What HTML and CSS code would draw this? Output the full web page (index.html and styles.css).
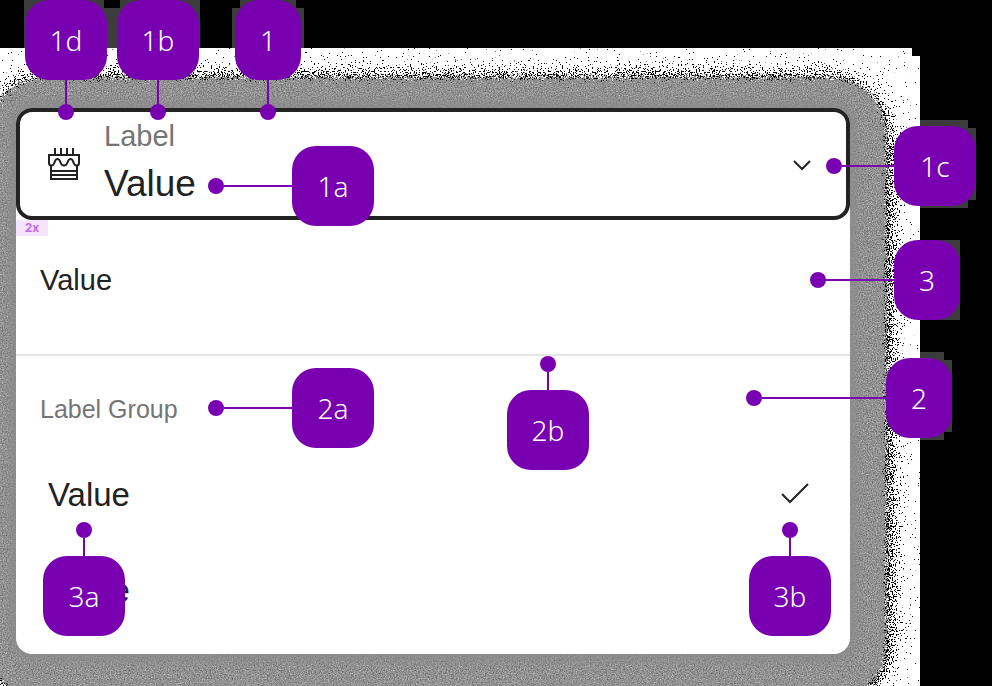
FILE: index.html
```html
<!DOCTYPE html>
<html lang="en">
<head>
<meta charset="utf-8">
<meta name="viewport" content="width=device-width, initial-scale=1">
<title>Select anatomy</title>
<link rel="stylesheet" href="styles.css">
</head>
<body>
<svg class="filters" width="0" height="0" aria-hidden="true">
  <filter id="speckle" x="-10%" y="-10%" width="120%" height="120%" color-interpolation-filters="sRGB">
    <feGaussianBlur in="SourceAlpha" stdDeviation="12" result="soft"/>
    <feTurbulence type="fractalNoise" baseFrequency="0.73" numOctaves="3" seed="4"/>
    <feColorMatrix values="0 0 0 0 0  0 0 0 0 0  0 0 0 0 0  1 0 0 0 0" result="noise"/>
    <feComposite in="soft" in2="noise" operator="arithmetic" k1="0" k2="0.65" k3="1.4" k4="-0.57"/>
    <feComponentTransfer><feFuncA type="linear" slope="30" intercept="-15"/></feComponentTransfer>
  </filter>
  <filter id="grain" x="-10%" y="-10%" width="120%" height="120%" color-interpolation-filters="sRGB">
    <feGaussianBlur in="SourceAlpha" stdDeviation="7" result="soft"/>
    <feTurbulence type="fractalNoise" baseFrequency="0.77" numOctaves="3" seed="9" result="turb"/>
    <feColorMatrix in="turb" values="0 0 0 0 0  0 0 0 0 0  0 0 0 0 0  1 0 0 0 0" result="noise"/>
    <feComposite in="soft" in2="noise" operator="arithmetic" k1="0" k2="1" k3="1" k4="-0.5"/>
    <feComponentTransfer result="mask"><feFuncA type="linear" slope="20" intercept="-10"/></feComponentTransfer>
    <feColorMatrix in="turb" values="0 0.5 0 0 0.32  0 0.5 0 0 0.32  0 0.5 0 0 0.32  0 0 0 0 1" result="tone"/>
    <feComposite in="tone" in2="mask" operator="in"/>
  </filter>
</svg>

<main class="stage">
  <div class="backdrop" aria-hidden="true"></div>
  <section class="select">
    <div class="shadow shadow-speckle" aria-hidden="true"></div>
    <div class="shadow shadow-grain" aria-hidden="true"></div>
    <div class="shadow shadow-core" aria-hidden="true"></div>

    <div class="panel">
      <button class="trigger" type="button" aria-haspopup="listbox" aria-expanded="true" aria-controls="options">
        <svg class="cake" viewBox="0 0 32 32" fill="none" stroke="#222" stroke-width="2" aria-hidden="true">
          <path d="M7 0v6M13 0v6M19 0v6M25 0v6"/>
          <path d="M3 17v14h26V17M3 23h26M3 27h26"/>
          <path d="M1 15V7h30v8c0 1.500-1 2.500-2.500 2.500S26 16 25.500 14.500 24.500 11 22.500 11 20 13 19.500 14.500 18.500 17.500 16 17.500 13 16 12.500 14.500 11.500 11 9.500 11 7 13 6.500 14.500 5.500 17.500 3.500 17.500 1 16.500 1 15z"/>
        </svg>
        <span class="field">
          <span class="field-label">Label</span>
          <span class="field-value">Value</span>
        </span>
        <svg class="chevron" viewBox="0 0 24 24" fill="none" stroke="#222" stroke-width="2" aria-hidden="true"><path d="M4 9l8 8 8-8"/></svg>
      </button>

      <div class="list" id="options" role="listbox" aria-label="Label">
        <span class="spacing-tag">2x</span>
        <div class="option option-small" role="option" aria-selected="false">Value</div>
        <div class="group" role="group" aria-labelledby="group-label">
          <div class="group-label" id="group-label">Label Group</div>
          <div class="option" role="option" aria-selected="true">Value
            <svg class="check" viewBox="0 0 32 32" fill="none" stroke="#222" stroke-width="2" aria-hidden="true"><path d="M4 15l8 8L30 5"/></svg>
          </div>
          <div class="option" role="option" aria-selected="false">Value</div>
        </div>
      </div>
    </div>
  </section>

  <div class="patches" aria-hidden="true">
    <i class="patch patch-a"></i><i class="patch patch-b"></i><i class="patch patch-c"></i>
    <i class="patch patch-d"></i><i class="patch patch-e"></i>
    <i class="patch patch-f"></i><i class="patch patch-g"></i><i class="patch patch-h"></i>
    <i class="patch patch-i"></i><i class="patch patch-j"></i>
  </div>

  <div class="marker down m-1d"><b>1d</b></div>
  <div class="marker down m-1b"><b>1b</b></div>
  <div class="marker down narrow m-1"><b>1</b></div>
  <div class="marker side m-1a"><b>1a</b></div>
  <div class="marker side m-1c"><b>1c</b></div>
  <div class="marker side narrow m-3"><b>3</b></div>
  <div class="marker side narrow m-2"><b>2</b></div>
  <div class="marker side m-2a"><b>2a</b></div>
  <div class="marker up m-2b"><b>2b</b></div>
  <div class="marker up m-3a"><b>3a</b></div>
  <div class="marker up m-3b"><b>3b</b></div>
</main>
</body>
</html>
```
FILE: styles.css
```css
* { box-sizing: border-box; }

body {
  margin: 0;
  background: #000;
  color: #222;
  font-family: "Liberation Sans", Arial, sans-serif;
}

.filters { position: absolute; }

.stage {
  position: relative;
  min-height: 100vh;
  padding: 108px 142px 32px 16px;
  overflow: hidden;
}

.backdrop {
  position: absolute;
  inset: 48px 72px 0 0;
  background: #fff;
  clip-path: polygon(0 0, calc(100% - 8px) 0, calc(100% - 8px) 8px, 100% 8px, 100% 100%, 0 100%);
}

/* Dark blocks behind the outer markers */
.patch { position: absolute; background: #3c3c3c; }
.patch-a { left: 24px; top: 0; width: 80px; height: 48px; }
.patch-b { left: 104px; top: 8px; width: 16px; height: 40px; }
.patch-c { left: 120px; top: 0; width: 80px; height: 48px; }
.patch-d { left: 240px; top: 0; width: 56px; height: 48px; }
.patch-e { left: 232px; top: 8px; width: 72px; height: 40px; }
.patch-f { right: 24px; top: 120px; width: 48px; height: 88px; }
.patch-g { right: 16px; top: 128px; width: 56px; height: 72px; }
.patch-h { right: 32px; top: 240px; width: 40px; height: 80px; }
.patch-i { right: 48px; top: 352px; width: 24px; height: 88px; }
.patch-j { right: 40px; top: 360px; width: 32px; height: 72px; }

.select { position: relative; }

.shadow { position: absolute; background: #000; }
.shadow-speckle { inset: -34px -42px -54px -32px; border-radius: 64px; filter: url(#speckle); }
.shadow-grain { inset: -31px -37px -48px -28px; border-radius: 56px; filter: url(#grain); }
.shadow-core { inset: 0; border-radius: 16px; background: #8a8a8a; box-shadow: 0 0 12px 6px #8c8c8c; }

.panel { position: relative; background: #fff; border-radius: 16px; }

.trigger {
  display: flex;
  align-items: center;
  gap: 24px;
  width: 100%;
  padding: 0 32px 0 28px;
  border: 4px solid #222;
  border-radius: 16px;
  background: #fff;
  color: inherit;
  font: inherit;
  text-align: left;
}

.cake { width: 32px; height: 32px; }
.chevron { width: 24px; height: 24px; }
.field { flex: 1; padding-bottom: 8px; }
.field-label, .field-value { display: block; line-height: 48px; }
.field-label { color: #757575; font-size: 29px; }
.field-value { font-size: 37px; }

.list { position: relative; padding-bottom: 15px; }

.spacing-tag {
  position: absolute;
  top: 0;
  left: 0;
  width: 32px;
  background: #f6e3fd;
  color: #c566ee;
  font: bold 12px/16px Inter, sans-serif;
  text-align: center;
}

.option {
  display: flex;
  align-items: center;
  justify-content: space-between;
  height: 96px;
  padding: 0 40px 0 32px;
  font-size: 33px;
}

.option-small { height: 120px; padding: 0 24px; font-size: 29px; }
.check { width: 32px; height: 32px; }
.group { margin-top: 14px; padding-top: 16px; border-top: 2px solid #e6e6e6; }
.group-label { padding: 0 24px; color: #757575; font-size: 25px; line-height: 75px; }

/* Numbered markers: a badge, a leader line and a dot */
.marker { position: absolute; display: flex; align-items: center; color: #7900b0; }

.marker b {
  width: 82px;
  border-radius: 24px;
  background: #7900b0;
  color: #fff;
  font: 300 28px/80px "Noto Sans", sans-serif;
  text-align: center;
}

.narrow b { width: 66px; }
.marker::before, .marker::after { content: ""; background: currentColor; }
.marker::before { width: 16px; height: 16px; border-radius: 50%; }
.side::after { order: 1; flex: 1; height: 2px; }
.side b { order: 2; }
.up { flex-direction: column; }
.up::after { order: 1; width: 2px; height: 18px; }
.up b { order: 2; }
.down { flex-direction: column-reverse; }
.down::after { order: 1; width: 2px; height: 24px; }
.down b { order: 2; }

.m-1d { left: 25px; top: 0; }
.m-1b { left: 117px; top: 0; }
.m-1 { left: 235px; top: 0; }
.m-1a { left: 208px; top: 146px; width: 166px; }
.m-2a { left: 208px; top: 368px; width: 166px; }
.m-1c { right: 16px; top: 126px; width: 150px; }
.m-3 { right: 32px; top: 240px; width: 150px; }
.m-2 { right: 40px; top: 358px; width: 206px; }
.m-2b { left: 507px; top: 356px; }
.m-3a { left: 43px; top: 522px; }
.m-3b { right: 161px; top: 522px; }
```
